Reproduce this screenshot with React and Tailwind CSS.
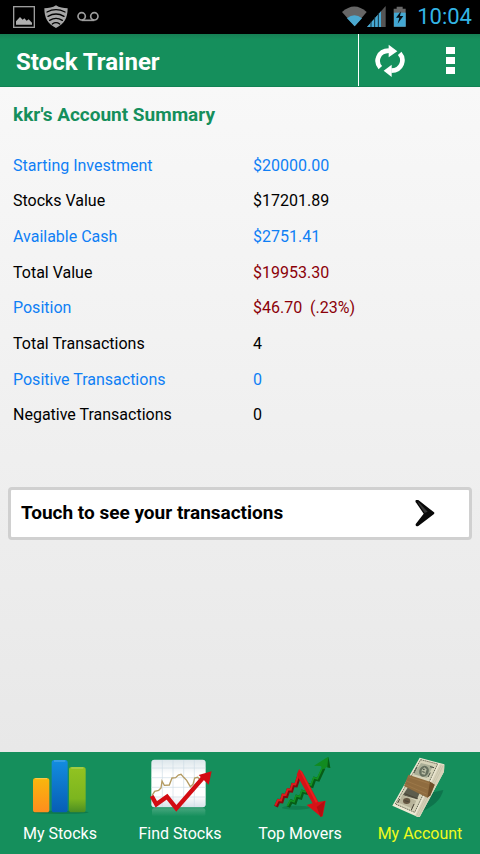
const rows = [
  { label: "Starting Investment", value: "$20000.00", labelColor: "text-[#0f7ff5]", valueColor: "text-[#0f7ff5]" },
  { label: "Stocks Value", value: "$17201.89", labelColor: "text-black", valueColor: "text-black" },
  { label: "Available Cash", value: "$2751.41", labelColor: "text-[#0f7ff5]", valueColor: "text-[#0f7ff5]" },
  { label: "Total Value", value: "$19953.30", labelColor: "text-black", valueColor: "text-[#8b0008]" },
  { label: "Position", value: "$46.70  (.23%)", labelColor: "text-[#0f7ff5]", valueColor: "text-[#8b0008]" },
  { label: "Total Transactions", value: "4", labelColor: "text-black", valueColor: "text-black" },
  { label: "Positive Transactions", value: "0", labelColor: "text-[#0f7ff5]", valueColor: "text-[#0f7ff5]" },
  { label: "Negative Transactions", value: "0", labelColor: "text-black", valueColor: "text-black" },
];

const StatusBar = () => (
  <div className="flex h-[34px] items-center justify-between bg-black pl-3 pr-2">
    <svg className="h-[34px] w-[90px]" viewBox="36 0 270 102" fill="none" stroke="#9c9c9c">
      <rect x="41" y="20" width="62" height="62" strokeWidth="4" />
      <path d="M48 74V64l12-13 8 8 5-4 7 7 6-4 10 10v6z" fill="#b0b0b0" stroke="none" />
      <path d="M168 16c10 7 22 9 35 9 0 29-10 47-35 59-25-12-35-30-35-59 13 0 25-2 35-9z" fill="#a6a6a6" stroke="none" />
      <g stroke="#000" strokeWidth="4" strokeLinecap="round">
        <path d="M141 36q27-14 54 0M144 49q24-14 48 0M149 61q19-12 38 0M157 72q11-8 22 0" />
      </g>
      <g strokeWidth="5">
        <circle cx="245" cy="49" r="11" />
        <circle cx="283" cy="49" r="11" />
        <path d="M245 61h38" />
      </g>
    </svg>
    <div className="flex items-center gap-2">
      <svg className="h-[34px] w-[68px]" viewBox="36 0 204 102">
        <path d="M39 36q37-33 74 0L77 79z" fill="#666" />
        <path d="M54 55q22-19 45 0L77 79z" fill="#4ba9d0" />
        <path d="M114 81l56-63v63z" fill="#555" />
        <path d="M114 81l42-47v47z" fill="#46a9d4" />
        <path d="M126 65v16M137 52v29M148 40v41" stroke="#14303c" strokeWidth="3" />
        <path d="M203 20h18v6h9v54h-36V26h9z" fill="#686868" />
        <path d="M195 38h35v42h-35z" fill="#43a8d3" />
        <path d="M216 34l-15 19h10l-5 18 17-23h-10z" fill="#050d12" />
      </svg>
      <span className="text-[22px] leading-[34px] text-[#33b5e5]">10:04</span>
    </div>
  </div>
);

const Header = () => (
  <header className="flex h-[53px] items-center border-b border-[#128254] bg-linear-to-b from-[#178055] from-0% to-[#158f5c] to-10%">
    <h1 className="flex-1 pt-1 pl-4 text-2xl font-bold text-white">Stock Trainer</h1>
    <button aria-label="Refresh" className="flex h-full w-[62px] items-center justify-center border-l border-white">
      <svg className="h-9 w-8" viewBox="129 126 96 108" fill="none" stroke="#fff" strokeWidth="14">
        <path d="M148 203C132 185 140 153 174 152" />
        <path d="M206 160C222 178 214 211 181 212" />
        <path d="M173 134l26 20-26 18zM182 231l-24-19 24-18z" fill="#fff" stroke="none" />
      </svg>
    </button>
    <button aria-label="More options" className="flex h-full w-[60px] flex-col items-center justify-center gap-[3px]">
      <span className="h-[7px] w-[9px] bg-white" />
      <span className="h-[7px] w-[9px] bg-white" />
      <span className="h-[7px] w-[9px] bg-white" />
    </button>
  </header>
);

const BarsIcon = () => (
  <svg className="h-[60px] w-[68px]" viewBox="78 36 204 180">
    <defs>
      <linearGradient id="orange" x2="0" y2="1">
        <stop stopColor="#f9b70c" />
        <stop offset="1" stopColor="#ff8d1e" />
      </linearGradient>
      <linearGradient id="blue" x2="0" y2="1">
        <stop stopColor="#138de0" />
        <stop offset="1" stopColor="#075db5" />
      </linearGradient>
      <linearGradient id="lime" x2="0" y2="1">
        <stop stopColor="#92c321" />
        <stop offset=".7" stopColor="#7cb51f" />
        <stop offset="1" stopColor="#4b8e22" />
      </linearGradient>
    </defs>
    <ellipse cx="182" cy="202" rx="84" ry="5" fill="#0b6b42" opacity=".6" />
    <rect x="99" y="99" width="49" height="103" rx="8" fill="url(#orange)" />
    <rect x="155" y="45" width="48" height="157" rx="8" fill="url(#blue)" />
    <rect x="207" y="66" width="50" height="136" rx="8" fill="url(#lime)" />
    <path d="M106 101h35M162 48h34M214 69h36" stroke="#fff" strokeOpacity=".3" strokeWidth="3" />
  </svg>
);

const ChartIcon = () => (
  <svg className="h-[60px] w-[68px]" viewBox="78 36 204 180">
    <defs>
      <linearGradient id="card" x2="0" y2="1">
        <stop stopColor="#dce6eb" />
        <stop offset=".3" stopColor="#fff" />
        <stop offset=".75" stopColor="#fff" />
        <stop offset="1" stopColor="#d9e2ea" />
      </linearGradient>
      <linearGradient id="mirror" x2="0" y2="1">
        <stop stopColor="#8bc7ae" stopOpacity=".4" />
        <stop offset="1" stopColor="#8bc7ae" stopOpacity="0" />
      </linearGradient>
    </defs>
    <rect x="96" y="190" width="160" height="24" rx="6" fill="url(#mirror)" />
    <rect x="94" y="44" width="163" height="143" rx="9" fill="url(#card)" />
    <path d="M95 69h161M95 98h161M95 127h161M95 156h161M127 45v141M159 45v141M191 45v141M223 45v141" stroke="#cfdce6" strokeWidth="2" />
    <path d="M96 152l8-13 12-3 7-7 3-21 7 13 15-1 8-21 11-1 8-8 8-2 8 9 9 9 11 19 8-7 5-19 9-2 5 5" fill="none" stroke="#b49b62" strokeWidth="4" />
    <path d="M95 153l14 25 32-23 28 35 82-94" fill="none" stroke="#d30c13" strokeWidth="13" />
    <path d="M275 79l-39 11 30 29z" fill="#d30c13" />
  </svg>
);

const MoversIcon = () => (
  <svg className="h-[60px] w-[68px]" viewBox="78 36 204 180">
    <ellipse cx="168" cy="188" rx="42" ry="6" fill="#0b6b42" opacity=".5" />
    <g fill="none">
      <path d="M145 186l9-17 11 4 6-18 11 3 6-18 11 3 5-24 12 4 8-22 11 3 16-35" stroke="#075c16" strokeWidth="11" />
      <path d="M142 183l9-17 11 4 6-18 11 3 6-18 11 3 5-24 12 4 8-22 11 3 16-35" stroke="#139322" strokeWidth="5" />
      <path d="M108 185l8-17 9 1 5-17 9 1 6-17 9 1 5-17 9 1 10-30" stroke="#7e0b0e" strokeWidth="12" />
      <path d="M106 182l8-17 9 1 5-17 9 1 6-17 9 1 5-17 9 1 10-30" stroke="#dc1c1d" strokeWidth="6" />
    </g>
    <path d="M222 62l43-27 6 34-12-2-8 6-9-10z" fill="#118b20" />
    <path d="M265 35l6 34-9-2z" fill="#075c16" />
    <path d="M177 73l10 7 48 91 22-4-9 47-5 1-43-35 18-5-48-86z" fill="#d51217" />
    <path d="M177 73l8 7 48 91-6 2z" fill="#e8211f" />
    <path d="M255 167l-9 47-5 1-11-29z" fill="#b60c10" />
  </svg>
);

const MoneyIcon = () => (
  <svg className="h-[60px] w-[68px]" viewBox="78 36 204 180">
    <path d="M206 145l44-10q-10 42-70 67z" fill="#07543a" opacity=".45" />
    <path d="M179 38l74 20-1 22-74 138-81-36z" fill="#eee9d4" />
    <path d="M239 57l14 2-1 21-74 138-13-6z" fill="#d7d2b9" />
    <path d="M244 60l-73 151M249 62l-73 151" stroke="#aaa58b" strokeWidth="1" />
    <path d="M182 44l51 13-69 145-58-25z" fill="#d6d3b9" stroke="#696a56" strokeWidth="3" strokeDasharray="4 2" />
    <path d="M183 54l36 9-18 36-40-11z" fill="#a9ae96" />
    <ellipse cx="192" cy="79" rx="14" ry="17" transform="rotate(25 192 79)" fill="#66705f" />
    <path d="M185 75l8-8 7 6-5 16-10-2z" fill="#b7bba3" />
    <path d="M189 73h5M187 80l7 2M210 65l12 3M204 96l7-13M171 66l-9 18" stroke="#434b40" strokeWidth="3" />
    <path d="M144 127l36 15-9 21-43-12z" fill="#5d5d4d" />
    <path d="M127 149l42 18-11 24-42-18z" fill="#b8b49a" />
    <ellipse cx="140" cy="168" rx="11" ry="9" fill="#655641" />
    <path d="M134 167l12 3M119 162l-6 12M162 177l-8 18M134 146l39 15" stroke="#494436" strokeWidth="3" />
    <path d="M145 89l65 21 14 9-13 32-9 7-70-35z" fill="#8f6c3f" />
    <path d="M210 110l14 9-13 32-9 7z" fill="#6f4e28" />
    <path d="M144 95l64 21M139 108l64 25M135 118l65 29" stroke="#a17d4d" strokeWidth="2" />
  </svg>
);

const tabs = [
  { name: "My Stocks", Icon: BarsIcon, color: "text-white" },
  { name: "Find Stocks", Icon: ChartIcon, color: "text-white" },
  { name: "Top Movers", Icon: MoversIcon, color: "text-white" },
  { name: "My Account", Icon: MoneyIcon, color: "text-[#f0fb1c]" },
];

const TabBar = () => (
  <nav className="grid h-[102px] grid-cols-4 bg-[#158f5c]">
    {tabs.map(({ name, Icon, color }) => (
      <button key={name} className="flex flex-col items-center pt-[5px]">
        <Icon />
        <span className={`mt-[5px] text-base leading-6 ${color}`}>{name}</span>
      </button>
    ))}
  </nav>
);

export default function App() {
  return (
    <div className="flex min-h-screen flex-col bg-[#f0f0f0] font-['Roboto',sans-serif]">
      <StatusBar />
      <Header />
      <main className="flex-1 bg-linear-to-b from-[#f8f8f8] to-[#e8e8e8]">
        <h2 className="px-[13px] pt-4 text-[19px] leading-6 font-bold text-[#158f5c]">kkr's Account Summary</h2>
        <table className="mt-[21px] h-[285px] w-full table-fixed text-left text-base leading-6">
          <tbody>
            {rows.map((row) => (
              <tr key={row.label}>
                <th scope="row" className={`w-[253px] p-0 pl-[13px] font-normal ${row.labelColor}`}>{row.label}</th>
                <td className={`p-0 whitespace-pre ${row.valueColor}`}>{row.value}</td>
              </tr>
            ))}
          </tbody>
        </table>
        <div className="px-2 pt-[54px]">
          <button className="flex h-[53px] w-full items-center justify-between rounded border-3 border-[#d0d0d0] bg-white pr-[34px] pl-[10px] text-[19px] font-bold text-black">
            Touch to see your transactions
            <svg className="h-7 w-5" viewBox="105 59 60 84">
              <path d="M107 60q4-4 9 0l46 36q2 2 0 5l-46 35q-7 4-9-1-1-3 2-6l22-29-22-32q-4-4-2-8z" fill="#080808" />
              <path d="M113 63l30 31-9 4-18-27z" fill="#555" opacity=".6" />
            </svg>
          </button>
        </div>
      </main>
      <TabBar />
    </div>
  );
}
